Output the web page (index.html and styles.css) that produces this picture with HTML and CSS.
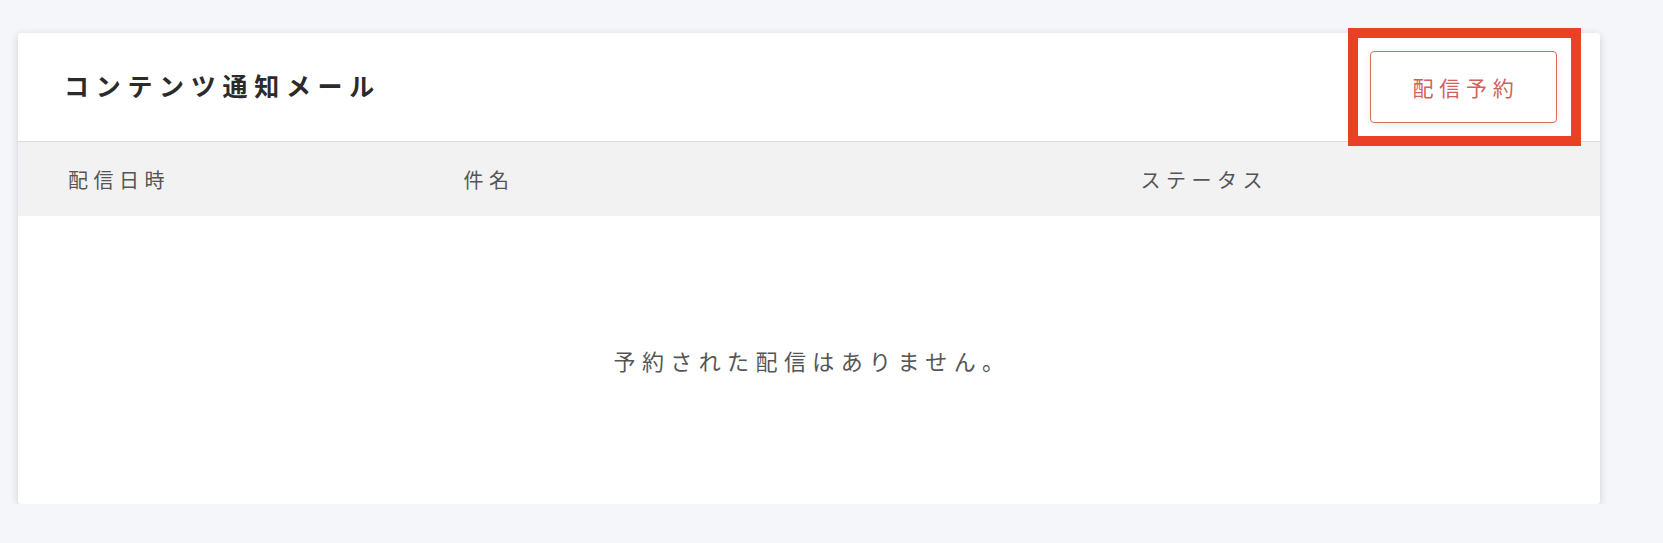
FILE: index.html
```html
<!DOCTYPE html>
<html lang="ja">
<head>
    <meta charset="UTF-8">
    <meta name="viewport" content="width=device-width, initial-scale=1.0">
    <title>コンテンツ通知メール</title>
    <link rel="stylesheet" href="styles.css">
</head>
<body>
    <div class="page">
        <div class="card">
            <div class="card-header">
                <h2>コンテンツ通知メール</h2>
                <div class="action">
                    <button type="button">配信予約</button>
                    <span class="highlight"></span>
                </div>
            </div>
            <div class="table-head">
                <div class="col">配信日時</div>
                <div class="col">件名</div>
                <div class="col">ステータス</div>
            </div>
            <div class="empty">予約された配信はありません。</div>
        </div>
    </div>
</body>
</html>
```

FILE: styles.css
```css
body {
    font-family: "Noto Sans CJK JP", "Noto Sans", sans-serif;
    background-color: #f5f6fa;
    margin: 0;
    padding: 0;
}

.page {
    padding: 33px 63px 0 18px;
}

.card {
    background: #fff;
    border-radius: 3px;
    box-shadow: 0 2px 8px rgba(0, 0, 0, 0.16);
    height: 471px;
    display: flex;
    flex-direction: column;
}

.card-header {
    display: flex;
    align-items: center;
    justify-content: space-between;
    padding: 18px 43px 18px 46px;
    border-bottom: 1px solid #dcdcdc;
}

h2 {
    margin: 0 0 5px;
    font-size: 25px;
    font-weight: bold;
    letter-spacing: 6.7px;
    color: #2b2b2b;
}

.action {
    position: relative;
}

button {
    display: block;
    width: 187px;
    height: 72px;
    padding: 0;
    background: #fff;
    color: #d0615b;
    border: 1px solid #d66c66;
    border-radius: 4px;
    box-shadow: 0 2px 10px rgba(0, 0, 0, 0.08);
    font-family: inherit;
    font-size: 21px;
    letter-spacing: 5.7px;
    text-indent: 5px;
    cursor: pointer;
}

/* annotation frame around the button */
.highlight {
    position: absolute;
    top: -23px;
    right: -24px;
    bottom: -23px;
    left: -22px;
    border: 10px solid #e94027;
    pointer-events: none;
}

.table-head {
    display: grid;
    grid-template-columns: 25% 42.8% 1fr;
    height: 74px;
    align-items: center;
    background: #f2f2f2;
}

.col {
    padding-left: 50px;
    font-size: 20px;
    letter-spacing: 5.5px;
    color: #555;
}

.empty {
    flex: 1;
    display: flex;
    align-items: center;
    justify-content: center;
    padding-left: 6px;
    font-size: 22px;
    letter-spacing: 6.4px;
    color: #555;
}
```
